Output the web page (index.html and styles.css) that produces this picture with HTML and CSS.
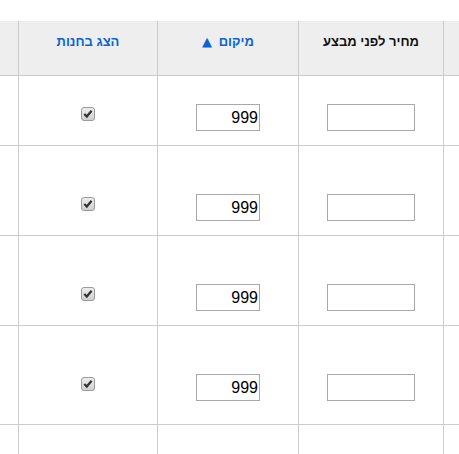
FILE: index.html
```html
<!DOCTYPE html>
<html lang="he">
<head>
<meta charset="utf-8">
<title>טבלה</title>
<link rel="stylesheet" href="styles.css">
</head>
<body>
<div class="viewport">
  <table class="grid" dir="rtl">
    <thead>
      <tr>
        <th class="c1"><div class="hcell"></div></th>
        <th class="c2"><div class="hcell">מחיר לפני מבצע</div></th>
        <th class="c3"><div class="hcell"><a class="sort" href="#">מיקום <span class="arrow">▲</span></a></div></th>
        <th class="c4"><div class="hcell"><a class="sort" href="#">הצג בחנות</a></div></th>
        <th class="c5"><div class="hcell"></div></th>
      </tr>
    </thead>
    <tbody>
      <tr class="r1">
        <td><div class="cell"></div></td>
        <td><div class="cell"><input class="price" type="text" value=""></div></td>
        <td><div class="cell"><input class="pos" type="text" value="999"></div></td>
        <td><div class="cell chk"><span class="cb"><svg width="14" height="14" viewBox="0 0 14 14"><defs><linearGradient id="g1" x1="0" y1="0" x2="0" y2="1"><stop offset="0" stop-color="#eeeeee"/><stop offset="1" stop-color="#cfcfcf"/></linearGradient></defs><rect x="0.5" y="0.5" width="13" height="13" rx="2.5" fill="url(#g1)" stroke="#9a9a9a"/><path d="M3.3 7 L5.8 9.5 L10.6 3.8" fill="none" stroke="#333" stroke-width="2.2"/></svg></span></div></td>
        <td><div class="cell"></div></td>
      </tr>
      <tr class="r2">
        <td><div class="cell"></div></td>
        <td><div class="cell"><input class="price" type="text" value=""></div></td>
        <td><div class="cell"><input class="pos" type="text" value="999"></div></td>
        <td><div class="cell chk"><span class="cb"><svg width="14" height="14" viewBox="0 0 14 14"><rect x="0.5" y="0.5" width="13" height="13" rx="2.5" fill="url(#g1)" stroke="#9a9a9a"/><path d="M3.3 7 L5.8 9.5 L10.6 3.8" fill="none" stroke="#333" stroke-width="2.2"/></svg></span></div></td>
        <td><div class="cell"></div></td>
      </tr>
      <tr class="r2">
        <td><div class="cell"></div></td>
        <td><div class="cell"><input class="price" type="text" value=""></div></td>
        <td><div class="cell"><input class="pos" type="text" value="999"></div></td>
        <td><div class="cell chk"><span class="cb"><svg width="14" height="14" viewBox="0 0 14 14"><rect x="0.5" y="0.5" width="13" height="13" rx="2.5" fill="url(#g1)" stroke="#9a9a9a"/><path d="M3.3 7 L5.8 9.5 L10.6 3.8" fill="none" stroke="#333" stroke-width="2.2"/></svg></span></div></td>
        <td><div class="cell"></div></td>
      </tr>
      <tr class="r4">
        <td><div class="cell"></div></td>
        <td><div class="cell"><input class="price" type="text" value=""></div></td>
        <td><div class="cell"><input class="pos" type="text" value="999"></div></td>
        <td><div class="cell chk"><span class="cb"><svg width="14" height="14" viewBox="0 0 14 14"><rect x="0.5" y="0.5" width="13" height="13" rx="2.5" fill="url(#g1)" stroke="#9a9a9a"/><path d="M3.3 7 L5.8 9.5 L10.6 3.8" fill="none" stroke="#333" stroke-width="2.2"/></svg></span></div></td>
        <td><div class="cell"></div></td>
      </tr>
      <tr class="r5">
        <td><div class="cell"></div></td>
        <td><div class="cell"></div></td>
        <td><div class="cell"></div></td>
        <td><div class="cell"></div></td>
        <td><div class="cell"></div></td>
      </tr>
    </tbody>
  </table>
</div>
</body>
</html>
```

FILE: styles.css
```css
html, body {
  margin: 0;
  padding: 0;
  background: #ffffff;
}

body {
  font-family: "Liberation Sans", Arial, sans-serif;
  color: #000;
  overflow: hidden;
}

.viewport {
  display: flex;
  justify-content: flex-end;
  overflow: hidden;
  padding-top: 21px;
}

.grid {
  flex: none;
  width: 541px;
  table-layout: fixed;
  border-collapse: separate;
  border-spacing: 0;
}

.grid th,
.grid td {
  box-sizing: border-box;
  padding: 0;
  vertical-align: top;
  border-left: 1px solid #cccccc;
  border-bottom: 1px solid #cccccc;
}

.grid th {
  background: #eeeeee;
}

.c1 { width: 16px; }
.c2 { width: 145px; }
.c3 { width: 141px; }
.c4 { width: 139px; }
.c5 { width: 100px; }

.hcell {
  height: 54px;
  box-sizing: border-box;
  padding-top: 13px;
  font-size: 13px;
  line-height: 15px;
  font-weight: bold;
  text-align: center;
  color: #111;
  white-space: nowrap;
}

.sort {
  color: #0a64d2;
  text-decoration: none;
}

.arrow {
  font-family: "DejaVu Sans", sans-serif;
  font-weight: normal;
  font-size: 13px;
  margin-right: 3px;
}

.cell {
  box-sizing: border-box;
  text-align: center;
  font-size: 0;
  line-height: 0;
}

.r1 .cell { height: 69px; padding-top: 28px; }
.r2 .cell { height: 89px; padding-top: 48px; }
.r4 .cell { height: 98px; padding-top: 48px; }
.r5 .cell { height: 40px; }

.r1 .chk { padding-top: 31px; }
.r2 .chk, .r4 .chk { padding-top: 51px; }

input {
  box-sizing: border-box;
  height: 27px;
  margin: 0;
  padding: 0 1px;
  border: 1px solid #a9a9a9;
  border-radius: 0;
  background: #fff;
  font-family: "Liberation Sans", Arial, sans-serif;
  font-size: 16px;
  color: #000;
  text-align: right;
  vertical-align: top;
  outline: none;
}

.price { width: 88px; }
.pos { width: 64px; }

.cb {
  display: inline-block;
  width: 14px;
  height: 14px;
  vertical-align: top;
}

.cb svg {
  display: block;
}
```
